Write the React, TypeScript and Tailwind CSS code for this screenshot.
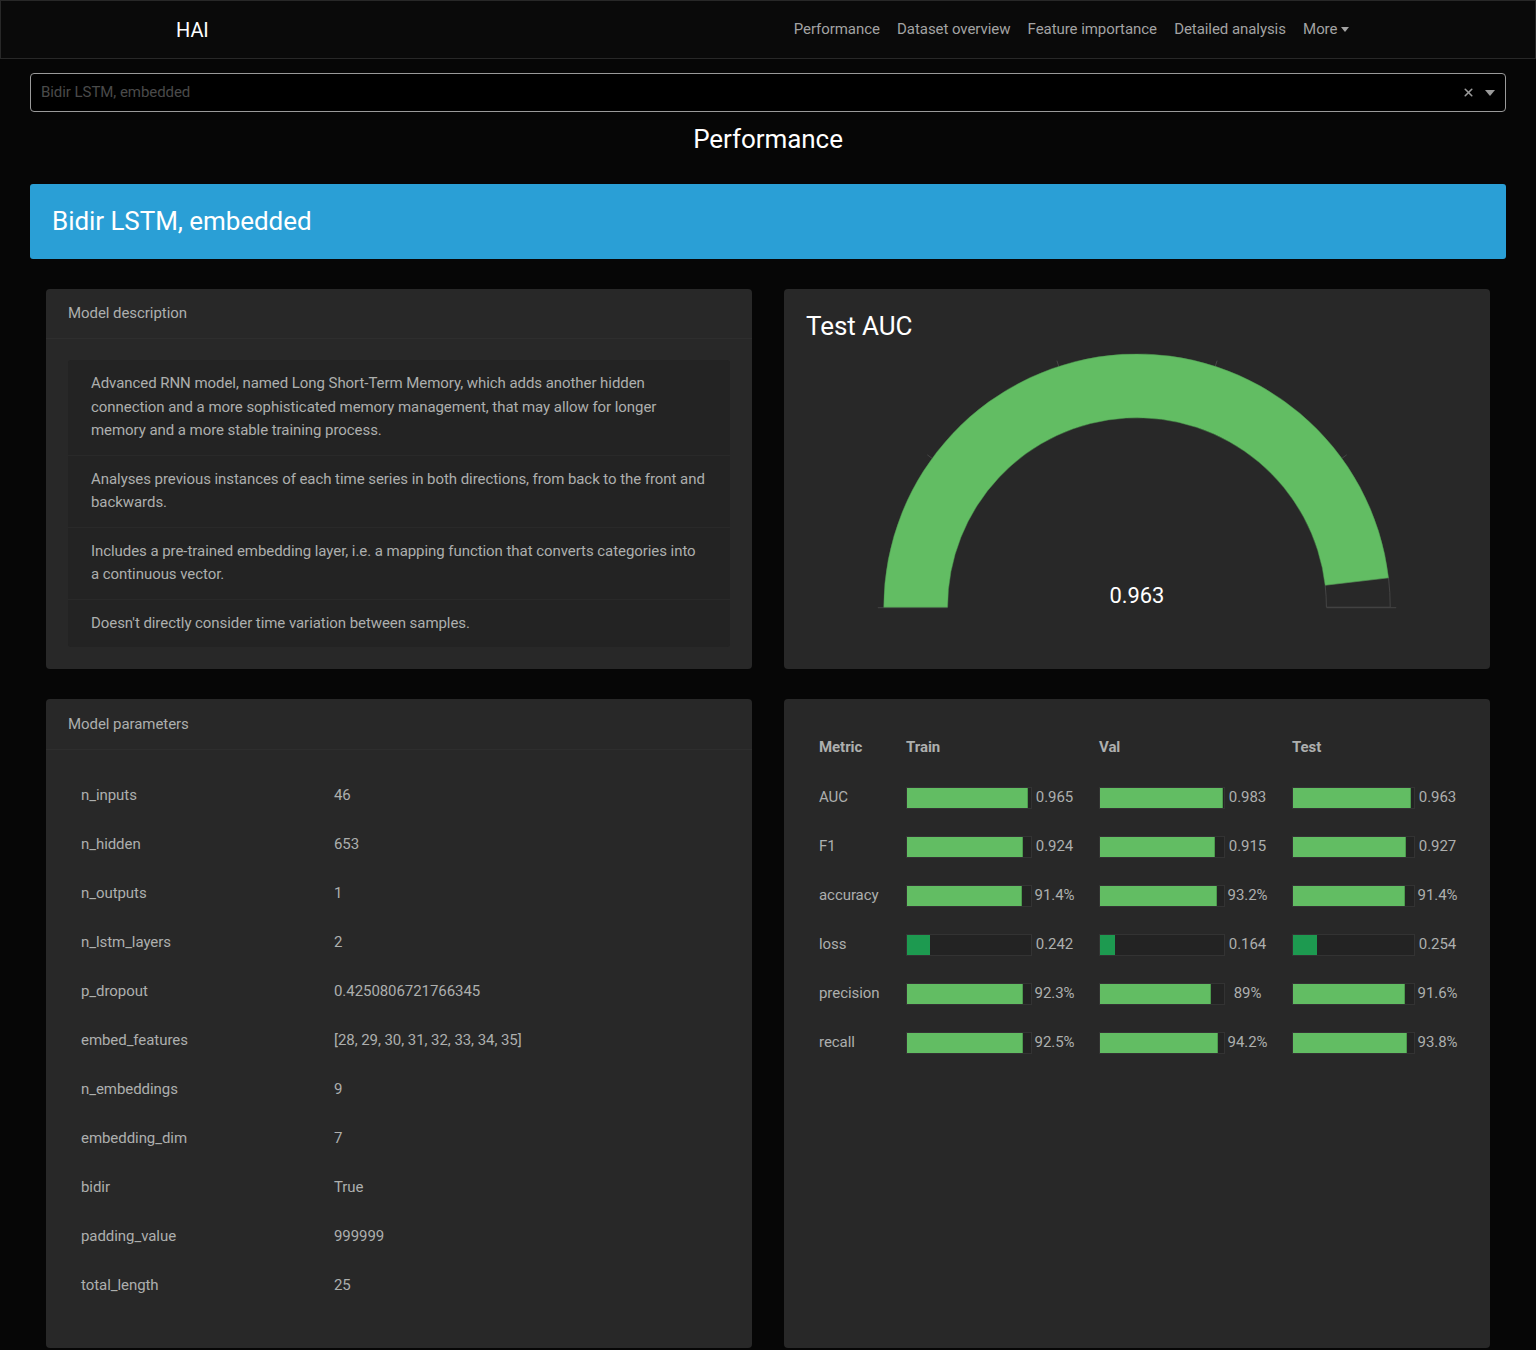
import { X } from 'lucide-react';

const navItems = ['Performance', 'Dataset overview', 'Feature importance', 'Detailed analysis'];

const description = [
  'Advanced RNN model, named Long Short-Term Memory, which adds another hidden connection and a more sophisticated memory management, that may allow for longer memory and a more stable training process.',
  'Analyses previous instances of each time series in both directions, from back to the front and backwards.',
  'Includes a pre-trained embedding layer, i.e. a mapping function that converts categories into a continuous vector.',
  "Doesn't directly consider time variation between samples.",
];

const params: [string, string][] = [
  ['n_inputs', '46'],
  ['n_hidden', '653'],
  ['n_outputs', '1'],
  ['n_lstm_layers', '2'],
  ['p_dropout', '0.4250806721766345'],
  ['embed_features', '[28, 29, 30, 31, 32, 33, 34, 35]'],
  ['n_embeddings', '9'],
  ['embedding_dim', '7'],
  ['bidir', 'True'],
  ['padding_value', '999999'],
  ['total_length', '25'],
];

type Cell = { fill: number; label: string };

const metrics: { name: string; loss?: boolean; cells: Cell[] }[] = [
  { name: 'AUC', cells: [{ fill: 121, label: '0.965' }, { fill: 123, label: '0.983' }, { fill: 118, label: '0.963' }] },
  { name: 'F1', cells: [{ fill: 116, label: '0.924' }, { fill: 115, label: '0.915' }, { fill: 113, label: '0.927' }] },
  { name: 'accuracy', cells: [{ fill: 115, label: '91.4%' }, { fill: 117, label: '93.2%' }, { fill: 112, label: '91.4%' }] },
  { name: 'loss', loss: true, cells: [{ fill: 23, label: '0.242' }, { fill: 15, label: '0.164' }, { fill: 24, label: '0.254' }] },
  { name: 'precision', cells: [{ fill: 116, label: '92.3%' }, { fill: 111, label: '89%' }, { fill: 112, label: '91.6%' }] },
  { name: 'recall', cells: [{ fill: 116, label: '92.5%' }, { fill: 118, label: '94.2%' }, { fill: 114, label: '93.8%' }] },
];

function Bar({ fill, label, loss, narrow }: Cell & { loss?: boolean; narrow?: boolean }) {
  return (
    <div className="flex items-center">
      <div className={narrow ? 'h-[22px] w-[123px] bg-[#232323] border border-[#333]' : 'h-[22px] w-[126px] bg-[#232323] border border-[#333]'}>
        <div
          className={loss ? 'h-full bg-[#1d9a50]' : 'h-full bg-[#62bd63] border-r border-[#4c9a4d]'}
          style={{ width: fill }}
        />
      </div>
      <span className="w-[45px] text-center">{label}</span>
    </div>
  );
}

function Gauge() {
  // centre (353, 266), outer radius 254, inner 190, value 0.963 of 0..1
  const ticks = [36, 72, 108, 144].map((deg) => {
    const a = (deg * Math.PI) / 180;
    return {
      x1: 353 + 254 * Math.cos(a),
      y1: 266 - 254 * Math.sin(a),
      x2: 353 + 260 * Math.cos(a),
      y2: 266 - 260 * Math.sin(a),
    };
  });
  return (
    <svg width="706" height="328" viewBox="0 0 706 328" className="block">
      {ticks.map((t, i) => (
        <line key={i} x1={t.x1} y1={t.y1} x2={t.x2} y2={t.y2} stroke="#444" strokeWidth="1" />
      ))}
      <line x1="93" y1="266.5" x2="163" y2="266.5" stroke="#444" strokeWidth="1" />
      <line x1="543" y1="266.5" x2="613" y2="266.5" stroke="#444" strokeWidth="1" />
      <path
        d="M 605.29 236.54 A 254 254 0 0 1 607 266 L 543 266 A 190 190 0 0 0 541.72 243.96 Z"
        fill="none"
        stroke="#444"
        strokeWidth="1"
      />
      <path
        d="M 99 266 A 254 254 0 0 1 605.29 236.54 L 541.72 243.96 A 190 190 0 0 0 163 266 Z"
        fill="#62bd63"
        stroke="#4f9a50"
        strokeWidth="0.5"
      />
      <text x="353" y="262" textAnchor="middle" fill="#ffffff" fontSize="22" fontFamily="Roboto, sans-serif">
        0.963
      </text>
    </svg>
  );
}

export default function App() {
  return (
    <div className="min-h-[1350px] bg-[#060606] text-[15px] tracking-[-0.06px] text-[#adafae] font-['Roboto',sans-serif]">
      {/* Navbar */}
      <nav className="h-[59px] bg-[#0a0a0a] border border-[#282828] flex items-center justify-between pl-[175px] pr-[177px]">
        <span className="text-[20px] text-white">HAI</span>
        <div className="flex items-center">
          {navItems.map((item) => (
            <span key={item} className="px-[8.6px] text-[#a3a3a3]">
              {item}
            </span>
          ))}
          <span className="px-[8.6px] text-[#a3a3a3] flex items-center gap-1">
            More
            <svg width="8" height="5" viewBox="0 0 8 5">
              <path d="M0 0 L8 0 L4 5 Z" fill="#a3a3a3" />
            </svg>
          </span>
        </div>
      </nav>

      <div className="px-[30px]">
        {/* Model select */}
        <div className="mt-[14px] h-[39px] bg-black border border-[#9a9a9a] rounded-[4px] flex items-center pl-[10px] pr-[10px]">
          <span className="flex-1 text-[#4a4a4a]">Bidir LSTM, embedded</span>
          <X size={13} strokeWidth={3} className="text-[#9a9a9a]" />
          <svg width="10" height="6" viewBox="0 0 10 6" className="ml-[10px]">
            <path d="M0 0 L10 0 L5 6 Z" fill="#9a9a9a" />
          </svg>
        </div>

        <h1 className="mt-[12px] text-center text-[26px] leading-[31px] text-white">Performance</h1>

        <div className="mt-[29px] h-[75px] bg-[#2a9fd6] rounded-[3px] flex items-center px-[22px]">
          <span className="text-[26px] text-white">Bidir LSTM, embedded</span>
        </div>

        <div className="px-4 mt-[30px] grid grid-cols-2 gap-8">
          {/* Model description */}
          <div className="h-[380px] bg-[#282828] rounded-[4px] flex flex-col">
            <div className="h-[51px] flex items-center px-[22px] border-b border-[#2e2e2e]">Model description</div>
            <div className="p-[22px] pt-[21px]">
              <div className="bg-[#232323] rounded-[3px]">
                {description.map((d, i) => (
                  <div
                    key={i}
                    className={
                      i === 0
                        ? 'px-[23px] py-3 leading-[23.5px]'
                        : 'px-[23px] py-3 leading-[23.5px] border-t border-[#292929]'
                    }
                  >
                    {d}
                  </div>
                ))}
              </div>
            </div>
          </div>

          {/* Test AUC gauge */}
          <div className="h-[380px] bg-[#282828] rounded-[4px] flex flex-col">
            <div className="pt-[22px] px-[22px] text-[26px] leading-[31px] text-white">Test AUC</div>
            <Gauge />
          </div>
        </div>

        <div className="px-4 mt-[30px] grid grid-cols-2 gap-8">
          {/* Model parameters */}
          <div className="h-[649px] bg-[#282828] rounded-[4px] flex flex-col">
            <div className="h-[51px] flex items-center px-[22px] border-b border-[#2e2e2e]">Model parameters</div>
            <div className="px-[22px] pt-[21px]">
              {params.map(([k, v]) => (
                <div key={k} className="h-[49px] flex items-center">
                  <span className="w-[253px] pl-[13px]">{k}</span>
                  <span className="pl-[13px]">{v}</span>
                </div>
              ))}
            </div>
          </div>

          {/* Metrics */}
          <div className="h-[649px] bg-[#282828] rounded-[4px] pt-[23px] pl-[35px]">
            <div className="h-[51px] grid grid-cols-[87px_193px_193px_1fr] items-center font-bold">
              <span>Metric</span>
              <span>Train</span>
              <span>Val</span>
              <span>Test</span>
            </div>
            {metrics.map((m) => (
              <div key={m.name} className="h-[49px] grid grid-cols-[87px_193px_193px_1fr] items-center">
                <span>{m.name}</span>
                {m.cells.map((c, i) => (
                  <Bar key={i} fill={c.fill} label={c.label} loss={m.loss} narrow={i === 2} />
                ))}
              </div>
            ))}
          </div>
        </div>
      </div>
    </div>
  );
}
